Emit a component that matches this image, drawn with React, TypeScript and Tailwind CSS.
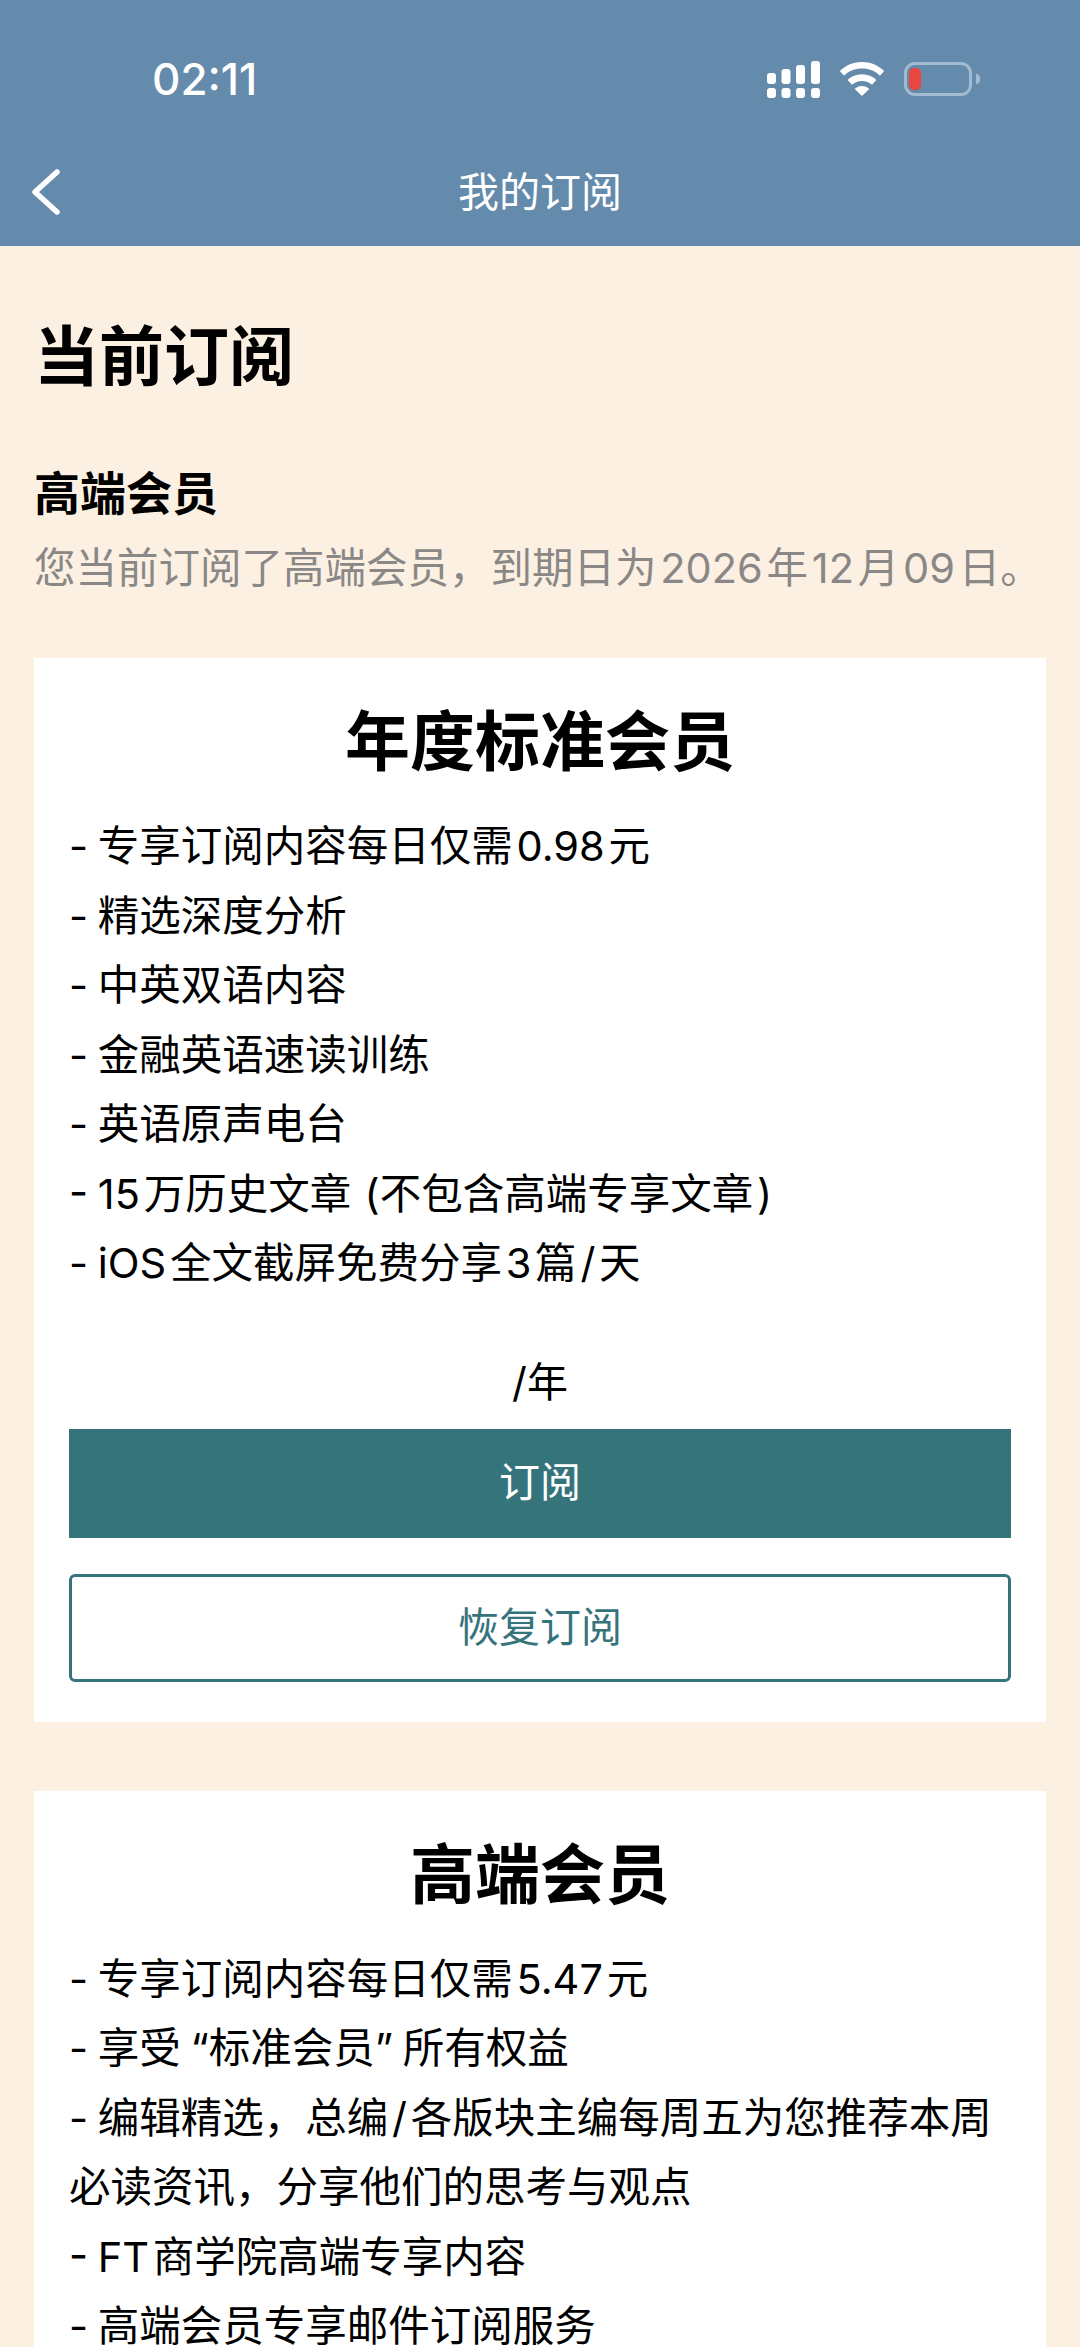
const font = { fontFamily: 'Inter,"Noto Sans CJK SC",sans-serif' };

function Signal() {
  return (
    <svg width="53" height="37" viewBox="0 0 53 37" className="block">
      <g fill="#fff">
        <rect x="0" y="12" width="9" height="11" rx="3" />
        <rect x="14.500" y="8" width="9" height="15" rx="3" />
        <rect x="29" y="4" width="9" height="19" rx="3" />
        <rect x="44" y="0" width="9" height="23" rx="3" />
        <rect x="0" y="27" width="9" height="10" rx="3" />
        <rect x="14.500" y="27" width="9" height="10" rx="3" />
        <rect x="29" y="27" width="9" height="10" rx="3" />
        <rect x="44" y="27" width="9" height="10" rx="3" />
      </g>
    </svg>
  );
}

function Wifi() {
  return (
    <svg width="48" height="34" viewBox="0 0 48 36" className="block">
      <g fill="#fff">
        <path d="M24 0C15 0 7 3.4 0.5 9.5L5 14.5C10 9.7 16.7 7 24 7s14 2.7 19 7.5l4.5-5C41 3.4 33 0 24 0Z" />
        <path d="M24 13c-6 0-11.400 2.300-15.300 6l4.700 5C16.200 21.500 20 20 24 20s7.800 1.500 10.600 4l4.700-5C35.400 15.300 30 13 24 13Z" />
        <path d="M24 25.500c-3 0-5.700 1.100-7.700 3L24 36l7.700-7.500c-2-1.900-4.700-3-7.700-3Z" />
      </g>
    </svg>
  );
}

function Battery() {
  return (
    <div className="flex items-center gap-[4px]">
      <div className="w-[68px] h-[34px] rounded-[11px] border-[3px] border-[#a3bbd0] flex items-center pl-[2px]">
        <div className="w-[12px] h-[22px] rounded-[5px] bg-[#e8463f]" />
      </div>
      <div className="w-[4px] h-[10px] rounded-r-full bg-[#a3bbd0]" />
    </div>
  );
}

function Feature({ children }: { children: React.ReactNode }) {
  return <p className="text-[41.5px] leading-[69.5px] text-black [word-spacing:-2px]">{children}</p>;
}

function Card({
  title,
  items,
  children,
}: {
  title: string;
  items: string[];
  children?: React.ReactNode;
}) {
  return (
    <section className="bg-white px-[35px] pt-[45px] pb-[40px]">
      <h2 className="text-center text-[65px] leading-[78px] font-bold text-black">{title}</h2>
      <div className="mt-[31px]">
        {items.map((t) => (
          <Feature key={t}>{t}</Feature>
        ))}
      </div>
      {children}
    </section>
  );
}

export default function App() {
  return (
    <div className="w-[1080px] h-[2347px] overflow-hidden bg-[#fcf0e3]" style={font}>
      <header className="h-[246px] bg-[#648aac] flex flex-col">
        <div className="flex items-center justify-between h-[96px] pt-[62px] pl-[152px] pr-[100px]">
          <span className="text-[44px] leading-[50px] font-medium text-white">02:11</span>
          <div className="flex items-center gap-[18px]">
            <Signal />
            <Wifi />
            <Battery />
          </div>
        </div>
        <div className="relative flex-1 flex items-center justify-center pt-[42px]">
          <svg
            width="30"
            height="46"
            viewBox="0 0 30 46"
            fill="none"
            stroke="#fff"
            strokeWidth="5.500"
            strokeLinecap="round"
            strokeLinejoin="round"
            className="absolute left-[31px] top-[73px]"
          >
            <path d="M26 3 L4 23 L26 43" />
          </svg>
          <h1 className="text-[41px] leading-[48px] text-white">我的订阅</h1>
        </div>
      </header>
      <main className="px-[34px]">
        <h2 className="pt-[71px] text-[65px] leading-[80px] font-bold text-black">当前订阅</h2>
        <h3 className="mt-[68px] text-[46px] leading-[56px] font-bold text-black">高端会员</h3>
        <p className="mt-[17px] text-[41.500px] leading-[60px] text-[#8a8886] whitespace-nowrap">
          {'您当前订阅了高端会员，到期日为\u200a2026\u200a年\u200a12\u200a月\u200a09\u200a日。'}
        </p>
        <div className="mt-[60px] flex flex-col gap-[69px]">
          <Card
            title="年度标准会员"
            items={[
              '- 专享订阅内容每日仅需\u200a0.98\u200a元',
              '- 精选深度分析',
              '- 中英双语内容',
              '- 金融英语速读训练',
              '- 英语原声电台',
              '- 15\u200a万历史文章\u200a (不包含高端专享文章\u200a)',
              '- iOS\u200a全文截屏免费分享\u200a3\u200a篇\u200a/\u200a天',
            ]}
          >
            <p className="mt-[52px] text-center text-[41px] leading-[62px] text-black">/年</p>
            <button className="mt-[16px] w-full h-[109px] bg-[#36747c] text-[41px] text-white">订阅</button>
            <button className="mt-[36px] w-full h-[108px] rounded-[6px] border-[3px] border-[#36747c] bg-white text-[41px] text-[#36747c]">
              恢复订阅
            </button>
          </Card>
          <Card
            title="高端会员"
            items={[
              '- 专享订阅内容每日仅需\u200a5.47\u200a元',
              '- 享受 “标准会员” 所有权益',
              '- 编辑精选，总编\u200a/\u200a各版块主编每周五为您推荐本周必读资讯，分享他们的思考与观点',
              '- FT\u200a商学院高端专享内容',
              '- 高端会员专享邮件订阅服务',
            ]}
          />
        </div>
      </main>
    </div>
  );
}
